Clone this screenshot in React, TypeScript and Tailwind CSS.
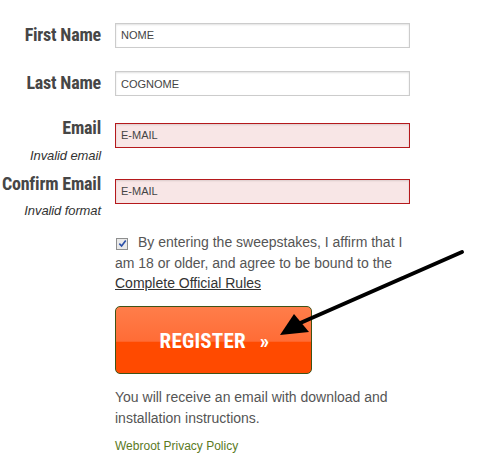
import React from 'react';

const labelCls =
  "font-['Roboto',sans-serif] font-bold text-[18px] leading-[20px] text-[#464646] [font-stretch:75%] tracking-[-0.2px]";

function Field({ value, invalid }: { value: string; invalid?: boolean }) {
  return (
    <input
      readOnly
      value={value}
      className={`w-[295px] h-[25px] px-[5px] text-[11px] font-['Liberation_Sans',sans-serif] text-[#444] outline-none shadow-[inset_0_1px_2px_rgba(0,0,0,0.12)] ${
        invalid ? 'bg-[#f8e6e6] border border-[#b5191c]' : 'bg-white border border-[#cccccc]'
      }`}
    />
  );
}

export default function App() {
  return (
    <div className="relative w-[498px] h-[466px] bg-white overflow-hidden font-['Liberation_Sans',Arial,sans-serif]">
      <form className="flex flex-col pt-[22px]">
        <div className="flex items-center">
          <label className={`w-[101px] text-right ${labelCls}`}>First Name</label>
          <div className="ml-[14px]">
            <Field value="NOME" />
          </div>
        </div>

        <div className="flex items-center mt-[23px]">
          <label className={`w-[101px] text-right ${labelCls}`}>Last Name</label>
          <div className="ml-[14px]">
            <Field value="COGNOME" />
          </div>
        </div>

        <div className="flex items-start mt-[26px] h-[56px]">
          <div className="w-[101px] flex flex-col items-end -mt-[4px]">
            <label className={labelCls}>Email</label>
            <span className="mt-[10px] text-[13px] leading-[15px] italic text-[#333] tracking-[-0.1px]">Invalid email</span>
          </div>
          <div className="ml-[14px]">
            <Field value="E-MAIL" invalid />
          </div>
        </div>

        <div className="flex items-start">
          <div className="w-[101px] flex flex-col items-end -mt-[4px]">
            <label className={`whitespace-nowrap ${labelCls}`}>Confirm Email</label>
            <span className="mt-[9px] text-[13px] leading-[15px] italic text-[#333] tracking-[-0.1px]">Invalid format</span>
          </div>
          <div className="ml-[14px]">
            <Field value="E-MAIL" invalid />
          </div>
        </div>

        <p className="ml-[115px] w-[300px] mt-[14px] text-[14px] leading-[20.5px] text-[#555]">
          <span className="inline-flex align-[-1px] mr-[10px] ml-[1px] w-[12px] h-[12px] border border-[#8e8f8f] bg-[#e9e9e9] items-center justify-center">
            <svg viewBox="0 0 10 10" className="w-[9px] h-[9px]">
              <path d="M1.5 5.2 L4 7.8 L8.6 1.6" fill="none" stroke="#2a4fa8" strokeWidth="1.8" />
            </svg>
          </span>
          By entering the sweepstakes, I affirm that I am 18 or older, and agree to be bound to the{' '}
          <a className="underline text-[#333]">Complete Official Rules</a>
        </p>

        <button
          type="button"
          className="ml-[115px] mt-[12px] w-[197px] h-[68px] pt-[5px] rounded-[5px] border border-[#3f5316] bg-[linear-gradient(#ff7d4a_0%,#ff6c36_52%,#ff4a00_53%,#ff4a00_100%)] text-white font-['Roboto',sans-serif] font-bold text-[21px] [font-stretch:75%] tracking-[0.2px] pl-[2px]"
        >
          REGISTER <span className="ml-[9px]">»</span>
        </button>

        <p className="ml-[115px] mt-[13px] w-[300px] text-[14px] leading-[21px] text-[#555]">
          You will receive an email with download and installation instructions.
        </p>

        <a className="ml-[115px] mt-[10px] text-[12px] leading-[14px] text-[#5b7a1e]">Webroot Privacy Policy</a>
      </form>

      <svg className="absolute left-0 top-0 pointer-events-none" width="498" height="466">
        <line x1="462" y1="252" x2="298" y2="324" stroke="#000" strokeWidth="4" strokeLinecap="round" />
        <polygon points="280,335 294,314 309,332" fill="#000" />
      </svg>
    </div>
  );
}
